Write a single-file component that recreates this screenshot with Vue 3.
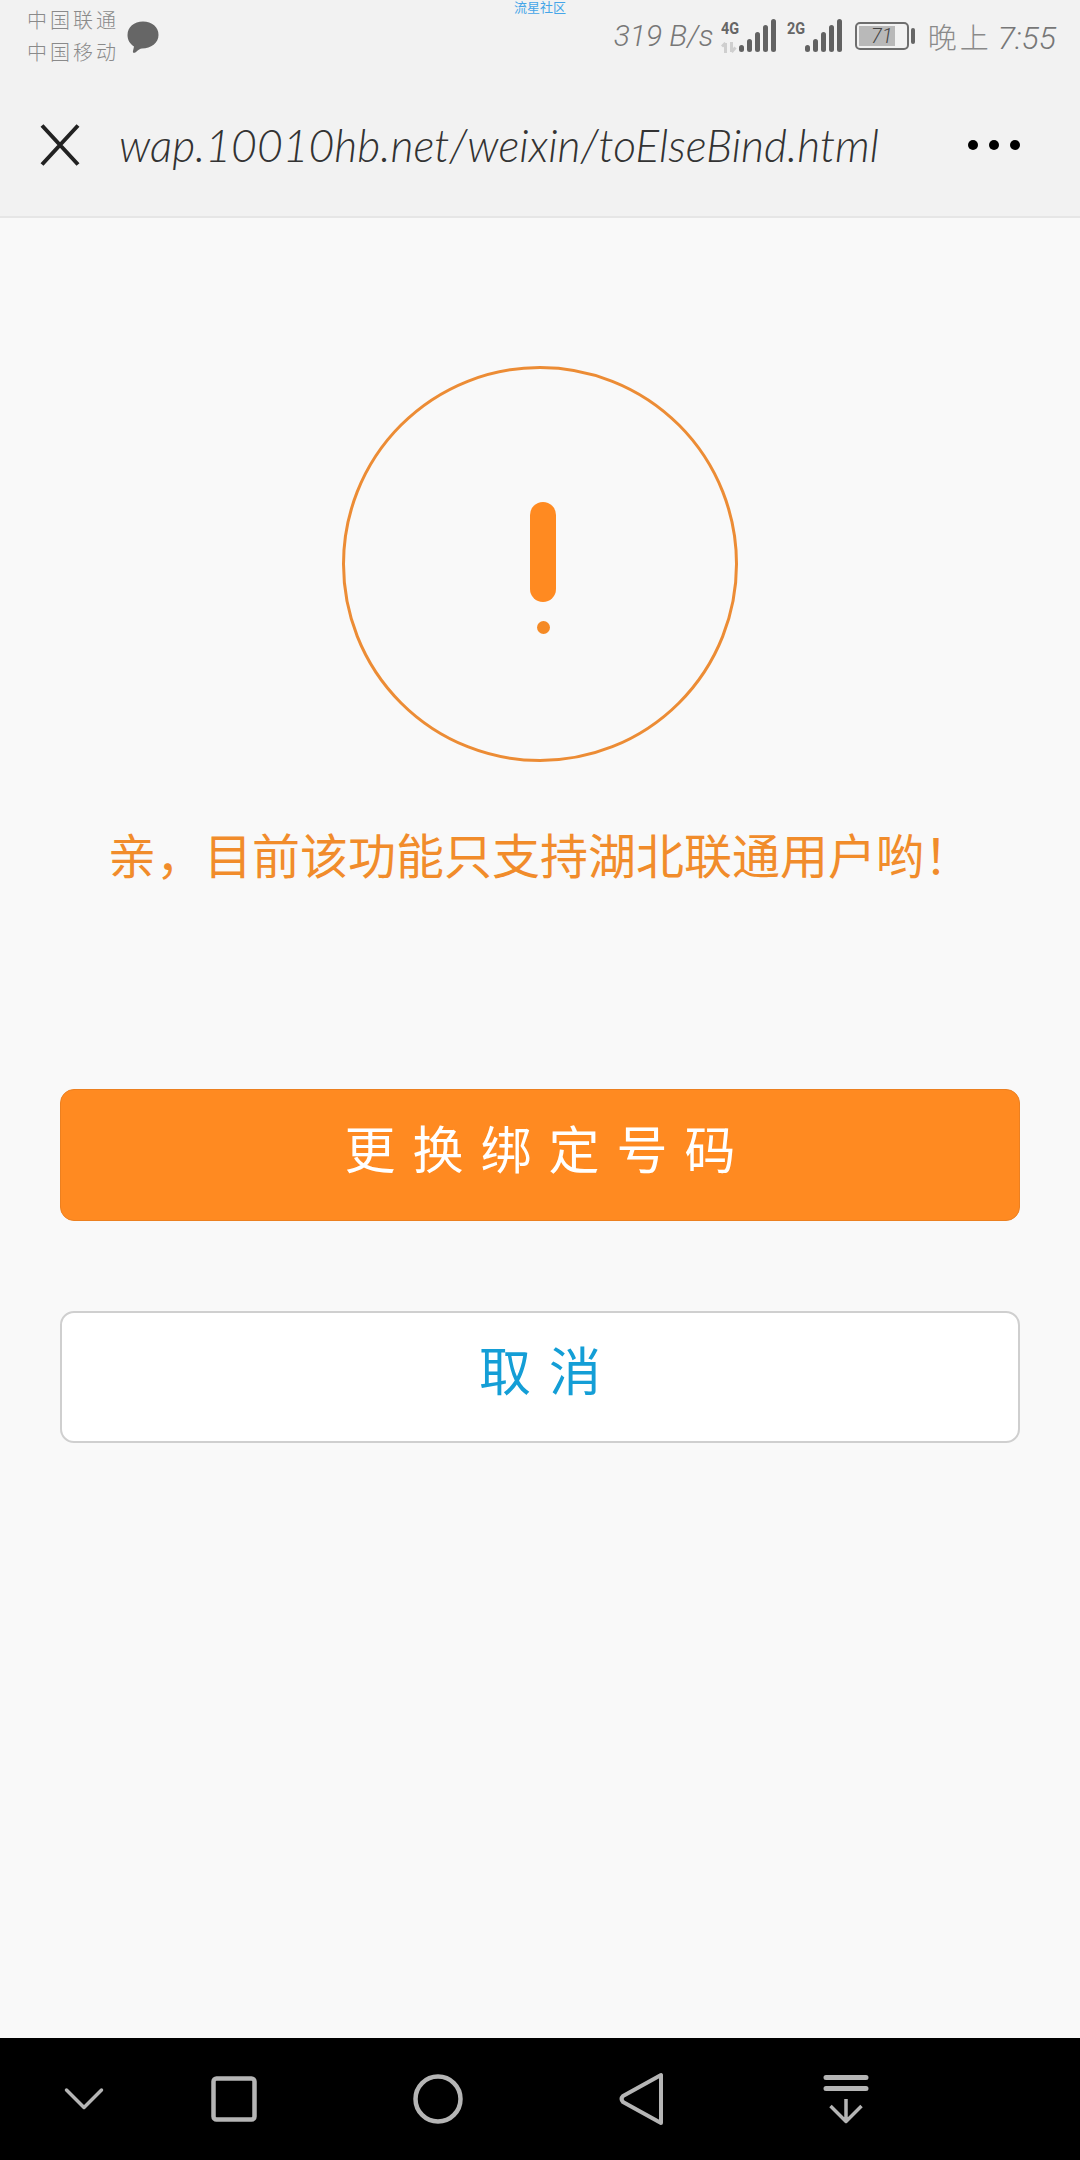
<script setup>
const url = "wap.10010hb.net/weixin/toElseBind.html";
const message = "亲\uFF0C目前该功能只支持湖北联通用户哟\uFF01";
const barHeights = [7, 13, 20, 27, 33];
</script>

<template>
    <div class="page">
        <header class="head">
            <span class="watermark">流星社区</span>
            <div class="status">
                <div class="status__left">
                    <div class="carriers">
                        <span>中国联通</span>
                        <span>中国移动</span>
                    </div>
                    <svg class="bubble" width="34" height="33" viewBox="0 0 32 33">
                        <path d="M16 0.500C25 0.500 31.500 6 31.500 14C31.500 22 24 27.500 15 27.500C13 27.500 11.500 29 9 31C7 32.500 5.500 32 6 30L7 25.500C3 23 0.500 19 0.500 14C0.500 6 7 0.500 16 0.500Z" fill="#666" />
                    </svg>
                </div>
                <div class="status__right">
                    <span class="speed">319 B/s</span>
                    <div class="signal">
                        <div class="signal__type">
                            <span class="signal__label">4G</span>
                            <svg class="signal__arrows" width="16" height="11" viewBox="0 0 16 11">
                                <path d="M4.500 11V1M1 4.500L4.500 1M10.500 0V10M10.500 10L14.500 5.500" fill="none" stroke="#cfcfcf" stroke-width="3" />
                            </svg>
                        </div>
                        <div class="signal__bars">
                            <i v-for="h in barHeights" :key="h" :style="{ height: h + 'px' }"></i>
                        </div>
                    </div>
                    <div class="signal">
                        <div class="signal__type">
                            <span class="signal__label">2G</span>
                        </div>
                        <div class="signal__bars">
                            <i v-for="h in barHeights" :key="h" :style="{ height: h + 'px' }"></i>
                        </div>
                    </div>
                    <div class="battery">
                        <div class="battery__body">
                            <div class="battery__fill"></div>
                            <span class="battery__num">71</span>
                        </div>
                        <div class="battery__nub"></div>
                    </div>
                    <span class="clock"><span class="clock__cn">晚上</span>7:55</span>
                </div>
            </div>
            <div class="titlebar">
                <svg class="close" width="42" height="44" viewBox="0 0 40 44">
                    <path d="M2 2.500L38 41.500M38 2.500L2 41.500" stroke="#222" stroke-width="4" fill="none" />
                </svg>
                <div class="url">{{ url }}</div>
                <div class="more"><i></i><i></i><i></i></div>
            </div>
        </header>

        <main class="main">
            <div class="ring">
                <div class="ring__bar"></div>
                <div class="ring__dot"></div>
            </div>
            <p class="message">{{ message }}</p>
            <div class="actions">
                <button class="btn btn--primary">更换绑定号码</button>
                <button class="btn btn--cancel">取消</button>
            </div>
        </main>

        <nav class="nav">
            <svg class="nav__icon nav__icon--first" width="60" height="60" viewBox="0 0 60 60">
                <path d="M12.500 21L30 38.500L47.500 21" fill="none" stroke="#b5b5b5" stroke-width="3.500" stroke-linecap="round" stroke-linejoin="round" />
            </svg>
            <svg class="nav__icon" width="60" height="60" viewBox="0 0 60 60">
                <rect x="9.500" y="9.500" width="41" height="41" rx="3" fill="none" stroke="#b5b5b5" stroke-width="4.500" />
            </svg>
            <svg class="nav__icon" width="60" height="60" viewBox="0 0 60 60">
                <circle cx="30" cy="30" r="22.500" fill="none" stroke="#b5b5b5" stroke-width="4.500" />
            </svg>
            <svg class="nav__icon" width="60" height="60" viewBox="0 0 60 60">
                <path d="M49 6V54L11 33C9 31 9 29 11 27Z" fill="none" stroke="#b5b5b5" stroke-width="4" stroke-linejoin="round" />
            </svg>
            <svg class="nav__icon" width="60" height="60" viewBox="0 0 60 60">
                <path d="M10 8.500H50M10 19.500H50" stroke="#b5b5b5" stroke-width="5" stroke-linecap="round" />
                <path d="M30 30V52M14.500 37L30 52.500L45.500 37" fill="none" stroke="#b5b5b5" stroke-width="3.500" stroke-linejoin="round" />
            </svg>
        </nav>
    </div>
</template>

<style>
html,
body {
    margin: 0;
    background: #f9f9f9;
}
</style>

<style scoped>
.page {
    position: relative;
    width: 1080px;
    height: 2160px;
    display: flex;
    flex-direction: column;
    background: #f9f9f9;
    font-family: "Noto Sans CJK SC", "Noto Sans", sans-serif;
    overflow: hidden;
}
.head {
    height: 216px;
    flex: none;
    display: flex;
    flex-direction: column;
    background: #f2f2f2;
    border-bottom: 2px solid #e6e6e6;
}
.watermark {
    position: absolute;
    top: 0;
    left: 514px;
    font-size: 13px;
    line-height: 13px;
    color: #45a5e8;
}
.status {
    height: 76px;
    flex: none;
    display: flex;
    justify-content: space-between;
    padding: 0 24px 0 27px;
}
.status__left {
    display: flex;
    align-items: flex-start;
}
.carriers {
    display: flex;
    flex-direction: column;
    padding-top: 4px;
    width: 99px;
    font-size: 20px;
    line-height: 32px;
    letter-spacing: 3px;
    font-weight: 300;
    color: #8a8a8a;
    white-space: nowrap;
}
.bubble {
    margin-top: 21px;
}
.status__right {
    display: flex;
    align-items: flex-start;
    color: #777;
}
.speed {
    margin-top: 16px;
    width: 107px;
    font-family: Roboto, sans-serif;
    font-style: italic;
    font-weight: 300;
    font-size: 30px;
    line-height: 40px;
    white-space: nowrap;
}
.signal {
    display: flex;
    align-items: flex-start;
    margin-top: 19px;
    width: 66px;
}
.signal__type {
    width: 18px;
    display: flex;
    flex-direction: column;
}
.signal__label {
    font-family: "Roboto", sans-serif;
    font-weight: 700;
    font-size: 17px;
    line-height: 18px;
    color: #666;
    transform: scaleX(0.85);
    transform-origin: left;
}
.signal__arrows {
    margin-top: 5px;
}
.signal__bars {
    display: flex;
    align-items: flex-end;
    gap: 3px;
    height: 33px;
}
.signal__bars i {
    width: 5px;
    background: #626262;
    border-radius: 2.500px;
}
.battery {
    display: flex;
    align-items: center;
    margin-top: 22px;
    width: 73px;
    margin-left: 2px;
}
.battery__body {
    position: relative;
    width: 54px;
    height: 28px;
    box-sizing: border-box;
    border: 2px solid #6e6e6e;
    border-radius: 5px;
    padding: 2px;
}
.battery__fill {
    height: 100%;
    width: 78%;
    background: #b9b9b9;
}
.battery__num {
    position: absolute;
    inset: 0;
    text-align: center;
    font-family: Roboto, sans-serif;
    font-style: italic;
    font-weight: 300;
    font-size: 20px;
    line-height: 24px;
    color: #444;
}
.battery__nub {
    width: 4px;
    height: 16px;
    margin-left: 2px;
    border-radius: 2px;
    background: #666;
}
.clock {
    margin-top: 16px;
    font-family: Roboto, sans-serif;
    font-style: italic;
    font-weight: 300;
    font-size: 32px;
    line-height: 40px;
    white-space: nowrap;
}
.clock__cn {
    font-family: "Noto Sans CJK SC", sans-serif;
    font-style: normal;
    font-size: 29px;
    font-weight: 300;
    letter-spacing: 3px;
    margin-right: 6px;
    color: #8a8a8a;
}
.titlebar {
    flex: 1;
    display: flex;
    align-items: center;
    padding: 0 60px 0 39px;
    margin-bottom: 2px;
}
.close {
    flex: none;
}
.url {
    margin-left: 38px;
    flex: 1;
    font-family: Lato, sans-serif;
    font-style: italic;
    font-weight: 300;
    font-size: 44.500px;
    line-height: 56px;
    color: #333;
    white-space: nowrap;
}
.more {
    display: flex;
    gap: 11px;
}
.more i {
    width: 10px;
    height: 10px;
    border-radius: 50%;
    background: #000;
}
.main {
    flex: 1;
    display: flex;
    flex-direction: column;
    align-items: center;
    padding-top: 148px;
}
.ring {
    width: 396px;
    height: 396px;
    box-sizing: border-box;
    border: 3px solid #ec8c35;
    border-radius: 50%;
    display: flex;
    flex-direction: column;
    align-items: center;
    padding-top: 133px;
    padding-left: 6px;
}
.ring__bar {
    width: 26px;
    height: 100px;
    border-radius: 13px;
    background: #ff8a21;
}
.ring__dot {
    width: 13px;
    height: 13px;
    margin-top: 19px;
    border-radius: 50%;
    background: #f58a25;
}
.message {
    margin: 61px 0 0;
    font-size: 48px;
    line-height: 60px;
    font-weight: 400;
    color: #f18c2b;
    white-space: nowrap;
}
.actions {
    margin-top: 206px;
    width: 960px;
    display: flex;
    flex-direction: column;
    gap: 90px;
}
.btn {
    display: block;
    width: 100%;
    height: 132px;
    box-sizing: border-box;
    border-radius: 14px;
    font-family: inherit;
    font-weight: 400;
    cursor: pointer;
}
.btn--primary {
    padding: 0 0 16px 17px;
    background: #ff8a21;
    border: 1px solid #ec8020;
    color: #fff;
    font-size: 51px;
    letter-spacing: 17px;
}
.btn--cancel {
    padding: 0 0 18px 18px;
    background: #fff;
    border: 2px solid #cfcfcf;
    color: #149ed6;
    font-size: 52px;
    letter-spacing: 18px;
}
.nav {
    height: 122px;
    flex: none;
    display: flex;
    align-items: center;
    gap: 144px;
    padding: 0 0 0 54px;
    box-sizing: border-box;
    background: #000;
}
.nav__icon {
    flex: none;
}
.nav__icon--first {
    margin-right: -54px;
}
</style>
